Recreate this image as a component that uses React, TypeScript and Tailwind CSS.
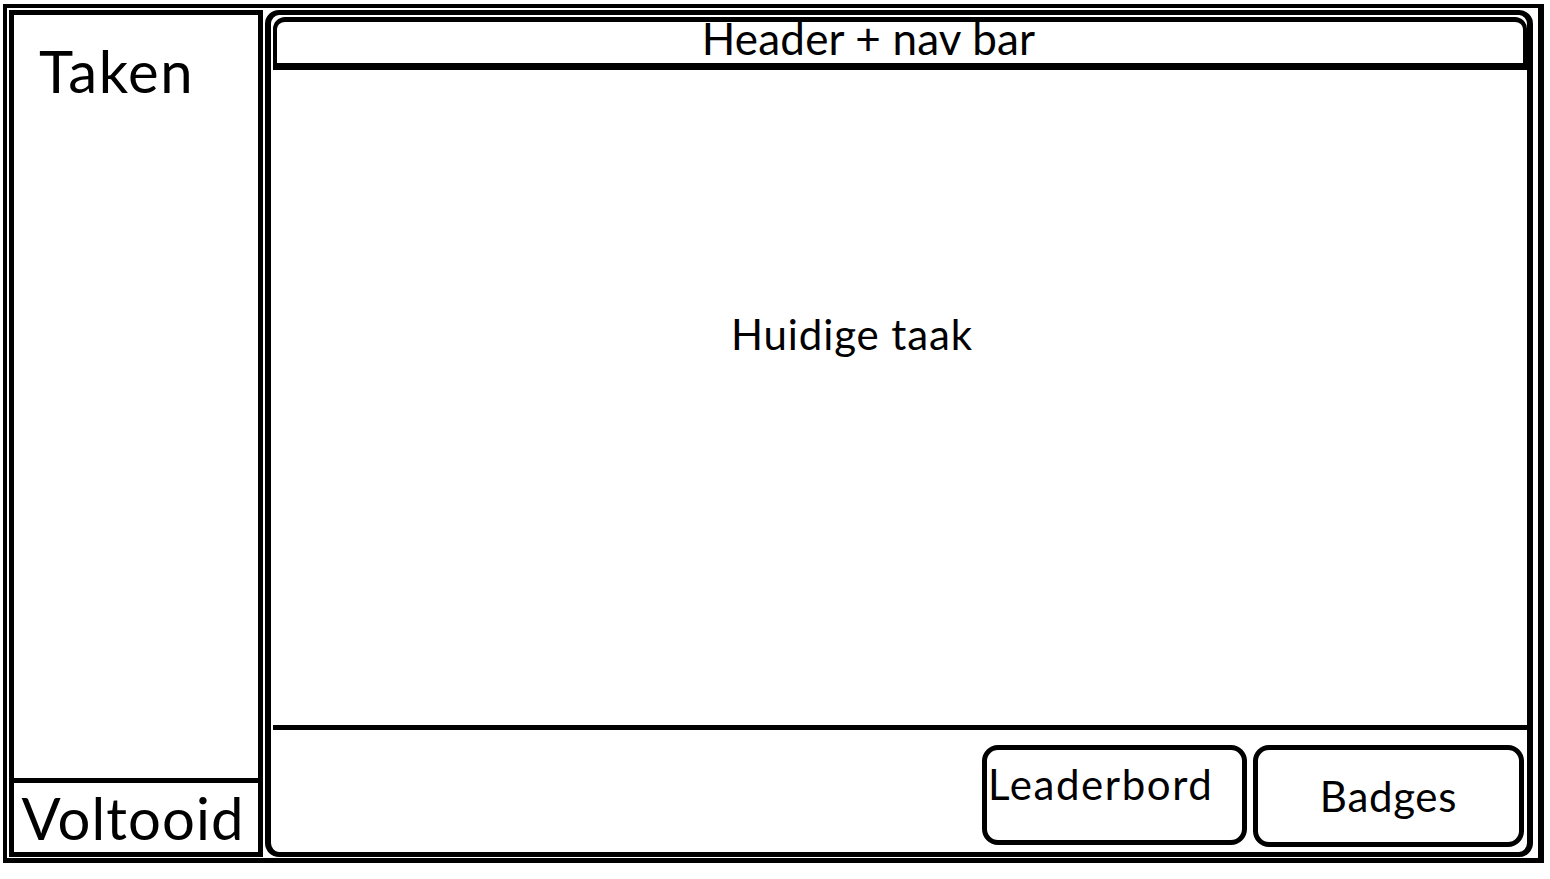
export default function App() {
  const font = { fontFamily: 'Lato, "Open Sans", sans-serif' };

  return (
    <div className="w-[1550px] h-[879px] bg-white text-black overflow-hidden" style={font}>
      {/* outer frame */}
      <div className="ml-[3px] mt-[4px] w-[1541px] h-[859px] border-black border-t-[4px] border-l-[4px] border-r-[6px] border-b-[5px] pt-[2px] pl-[2px] pr-[5px] pb-[1px] flex gap-[2px]">
        {/* sidebar */}
        <aside className="w-[254px] h-full border-[5px] border-black flex flex-col">
          <div className="flex-1 pt-[27px] pl-[25px]">
            <h2 className="text-[58px] leading-none tracking-[1.6px]">Taken</h2>
          </div>
          <div className="h-[74px] border-t-[5px] border-black flex items-center justify-center pr-[6px]">
            <span className="text-[58px] leading-none tracking-[1.1px]">Voltooid</span>
          </div>
        </aside>

        {/* main panel */}
        <main className="flex-1 h-full border-black border-x-[6px] border-y-[5px] rounded-[14px] flex flex-col">
          <header className="mt-[2px] ml-[2px] h-[53px] border-black border-t-[5px] border-x-[4px] border-b-[7px] rounded-t-[12px] flex justify-center items-start pr-[63px]">
            <span className="text-[44px] leading-[36px] -mt-[2px] tracking-[0.2px]">Header + nav bar</span>
          </header>

          <section className="flex-1 flex justify-center items-start pt-[243px] pr-[94px]">
            <p className="text-[42px] leading-none tracking-[0.9px]">Huidige taak</p>
          </section>

          <div className="ml-[2px] h-[5px] bg-black" />

          <div className="h-[122px] pt-[15px] pb-[5px] pr-[3px] flex justify-end gap-[6px]">
            <button className="w-[265px] h-[100px] border-[5px] border-black rounded-[16px] flex items-start pt-[13px] pl-[1px]">
              <span className="text-[42px] leading-none tracking-[1.6px]">Leaderbord</span>
            </button>
            <button className="w-[271px] h-[102px] border-[5px] border-black rounded-[16px] flex items-center justify-center">
              <span className="text-[42px] leading-none tracking-[0.7px]">Badges</span>
            </button>
          </div>
        </main>
      </div>
    </div>
  );
}
